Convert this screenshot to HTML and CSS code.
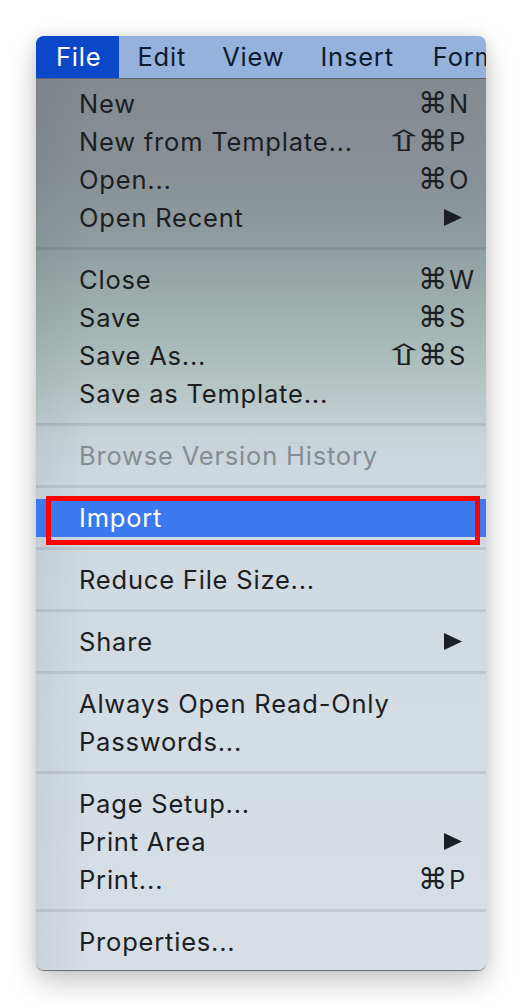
FILE: index.html
```html
<!DOCTYPE html>
<html>
<head>
<meta charset="utf-8">
<link rel="stylesheet" href="styles.css">
</head>
<body>
<div class="menu">
  <div class="menubar">
    <span class="mb-item active">File</span>
    <span class="mb-item">Edit</span>
    <span class="mb-item">View</span>
    <span class="mb-item">Insert</span>
    <span class="mb-item">Format</span>
  </div>
  <div class="body">
    <div class="item"><span class="label">New</span><span class="sc"><span class="mods">⌘</span><span class="key">N</span></span></div>
    <div class="item"><span class="label">New from Template...</span><span class="sc"><span class="mods"><span class="shift">⇧</span>⌘</span><span class="key">P</span></span></div>
    <div class="item"><span class="label">Open...</span><span class="sc"><span class="mods">⌘</span><span class="key">O</span></span></div>
    <div class="item"><span class="label">Open Recent</span><span class="sc"><span class="mods"></span><span class="key"><svg class="arrow" width="18" height="17" viewBox="0 0 18 17"><polygon points="0,0 18,8.5 0,17"/></svg></span></span></div>
    <div class="sep"></div>
    <div class="item"><span class="label">Close</span><span class="sc"><span class="mods">⌘</span><span class="key">W</span></span></div>
    <div class="item"><span class="label">Save</span><span class="sc"><span class="mods">⌘</span><span class="key">S</span></span></div>
    <div class="item"><span class="label">Save As...</span><span class="sc"><span class="mods"><span class="shift">⇧</span>⌘</span><span class="key">S</span></span></div>
    <div class="item"><span class="label">Save as Template...</span></div>
    <div class="sep"></div>
    <div class="item disabled"><span class="label">Browse Version History</span></div>
    <div class="sep"></div>
    <div class="item selected"><span class="label">Import</span><span class="redbox"></span></div>
    <div class="sep"></div>
    <div class="item"><span class="label">Reduce File Size...</span></div>
    <div class="sep"></div>
    <div class="item"><span class="label">Share</span><span class="sc"><span class="mods"></span><span class="key"><svg class="arrow" width="18" height="17" viewBox="0 0 18 17"><polygon points="0,0 18,8.5 0,17"/></svg></span></span></div>
    <div class="sep"></div>
    <div class="item"><span class="label">Always Open Read-Only</span></div>
    <div class="item"><span class="label">Passwords...</span></div>
    <div class="sep"></div>
    <div class="item"><span class="label">Page Setup...</span></div>
    <div class="item"><span class="label">Print Area</span><span class="sc"><span class="mods"></span><span class="key"><svg class="arrow" width="18" height="17" viewBox="0 0 18 17"><polygon points="0,0 18,8.5 0,17"/></svg></span></span></div>
    <div class="item"><span class="label">Print...</span><span class="sc"><span class="mods">⌘</span><span class="key">P</span></span></div>
    <div class="sep"></div>
    <div class="item"><span class="label">Properties...</span></div>
  </div>
</div>
</body>
</html>
```
FILE: styles.css
```css
html, body {
  margin: 0;
  padding: 0;
  background: #ffffff;
}
body {
  width: 522px;
  height: 1008px;
  overflow: hidden;
  font-family: "Inter", "Roboto", "Liberation Sans", sans-serif;
}
.menu {
  margin: 36px 0 0 36px;
  width: 450px;
  border-radius: 8px;
  overflow: hidden;
  box-shadow: 0 12px 30px rgba(0,0,0,0.22), 0 0 12px rgba(0,0,0,0.10), 0 1px 0 rgba(0,0,0,0.45);
}
.menubar {
  height: 42px;
  background: #95b2dc;
  border-bottom: 1px solid #5d646c;
  display: flex;
  align-items: center;
  white-space: nowrap;
  overflow: hidden;
}
.mb-item {
  padding: 0 18px;
  height: 42px;
  line-height: 42px;
  font-size: 25.5px;
  letter-spacing: 0.8px;
  color: #0f1a2e;
  flex-shrink: 0;
}
.mb-item.active {
  background: #0b48c9;
  color: #ffffff;
  padding: 0 18px 0 20px;
}
.mb-item:last-child {
  padding-left: 21px;
}
.body {
  padding: 6px 0 9px 0;
  background:
    linear-gradient(90deg, rgba(40,50,60,0.07) 0%, rgba(40,50,60,0) 12%),
    linear-gradient(180deg, #858a91 0%, #888f95 10%, #8f9c9e 18%, #a0b3b0 27%, #b3c4c2 34%, #c8d2d7 40%, #d0d8df 45%, #d3dbe3 70%, #d7dee6 100%);
}
.item {
  position: relative;
  height: 38px;
  box-sizing: border-box;
  padding: 0 9px 2px 43px;
  display: flex;
  align-items: center;
  font-size: 25.5px;
  letter-spacing: 0.8px;
  color: #1b1e22;
}
.label {
  flex: 1;
  white-space: nowrap;
}
.sc {
  display: flex;
  align-items: center;
}
.mods {
  display: flex;
  align-items: center;
  font-family: "DejaVu Sans", sans-serif;
  font-size: 29px;
  line-height: 1;
  letter-spacing: 0;
}
.shift {
  display: inline-block;
  width: 23px;
  margin-right: 4px;
  text-align: center;
  transform: scaleX(1.75);
}
.key {
  width: 28px;
  padding-left: 2px;
  display: flex;
  align-items: center;
}
.arrow {
  display: block;
  margin-left: -5px;
}
.arrow polygon {
  fill: #1b1e22;
}
.disabled {
  color: #868c93;
}
.selected {
  background: #3b79ef;
  color: #ffffff;
}
.redbox {
  position: absolute;
  left: 10px;
  right: 6px;
  top: -3px;
  bottom: -8px;
  border: 5px solid #ff0000;
}
.sep {
  height: 3px;
  margin: 10px 0 11px 0;
  background: rgba(30,40,50,0.10);
}
```
